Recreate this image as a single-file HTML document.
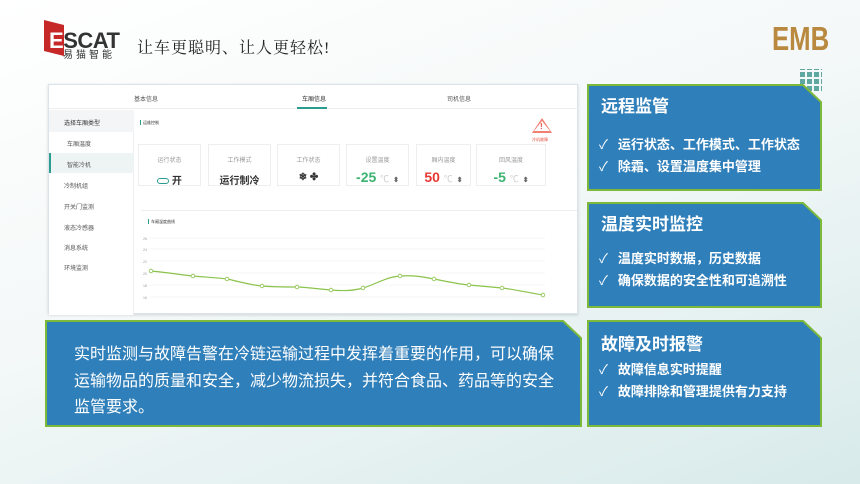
<!DOCTYPE html>
<html><head><meta charset="utf-8"><style>
*{margin:0;padding:0;box-sizing:border-box}
body{width:860px;height:484px;overflow:hidden;position:relative;background:linear-gradient(160deg,#ffffff 0%,#f4f8f8 45%,#d8eaea 100%);font-family:"Liberation Sans","Noto Sans CJK SC",sans-serif}
.abs{position:absolute}
.box{position:absolute}
.box svg{position:absolute;left:0;top:0}
.txt{position:absolute;color:#fff}
.t1{font-size:17px;font-weight:bold;left:14px;top:8px}
.li{font-size:13px;font-weight:bold;left:12px;position:absolute;white-space:nowrap}
.li span{font-weight:normal;margin-right:10px}
.shot{left:48px;top:84px;width:530px;height:230px;background:#fff;border:1px solid #dde3ea;box-shadow:0 1px 3px rgba(0,0,0,.15)}
.small{font-size:6px;color:#555}
.card{position:absolute;top:59px;height:42px;width:63px;border:1px solid #eee;text-align:center;font-size:6px;color:#999;padding-top:10px}
.card b{display:block;font-size:10px;margin-top:8px}
.card b.n{font-size:14px;margin-top:5px}
</style></head><body>
<div class="abs" style="left:44px;top:20px;width:20px;height:36px;background:#c62828;clip-path:polygon(0 0,100% 14%,100% 100%,0 86%)"></div>
<div class="abs" style="left:49px;top:28px;font-size:22px;font-weight:bold;color:#333;letter-spacing:-.5px;font-family:'Liberation Sans',sans-serif"><span style="color:#fff">E</span>SCAT</div>
<div class="abs" style="left:63px;top:46px;font-size:10px;color:#333;letter-spacing:3px">易猫智能</div>
<div class="abs" style="left:137px;top:35px;font-size:16px;color:#222;font-family:'Liberation Serif','Noto Serif CJK SC',serif;letter-spacing:1px">让车更聪明、让人更轻松!</div>
<div class="abs" style="left:772px;top:20px;font-size:33px;font-weight:bold;color:#b8893e;font-family:'Liberation Sans Narrow','Liberation Sans',sans-serif;transform:scaleX(.78);transform-origin:left">EMB</div>
<div class="abs" style="left:800px;top:69px;width:22px;height:22px;background:repeating-linear-gradient(90deg,#5fa8a0 0 5px,transparent 5px 7px);-webkit-mask:repeating-linear-gradient(0deg,#000 0 5px,transparent 5px 7px);mask:repeating-linear-gradient(0deg,#000 0 5px,transparent 5px 7px)"></div>

<div class="abs shot">
 <div class="abs" style="left:0;top:0;width:530px;height:24px;border-bottom:1px solid #eee"></div>
 <div class="abs small" style="left:85px;top:9px">基本信息</div>
 <div class="abs small" style="left:253px;top:9px;color:#333">车厢信息</div>
 <div class="abs" style="left:248px;top:22px;width:30px;height:2px;background:#2a9d8f"></div>
 <div class="abs small" style="left:398px;top:9px">司机信息</div>
 <div class="abs" style="left:0;top:25px;width:85px;height:205px;background:#fff;border-right:1px solid #eee"></div>
 <div class="abs" style="left:0;top:25px;width:85px;height:22px;background:#f3f5f7"></div>
 <div class="abs small" style="left:15px;top:33px;color:#333">选择车厢类型</div>
 <div class="abs small" style="left:18px;top:54px">车厢温度</div>
 <div class="abs" style="left:0;top:68px;width:85px;height:20px;background:#eef4f4;border-left:2px solid #2a9d8f"></div>
 <div class="abs small" style="left:18px;top:75px">智能冷机</div>
 <div class="abs small" style="left:15px;top:96px">冷制机组</div>
 <div class="abs small" style="left:15px;top:117px">开关门监测</div>
 <div class="abs small" style="left:15px;top:138px">液态冷感器</div>
 <div class="abs small" style="left:15px;top:158px">消息系统</div>
 <div class="abs small" style="left:15px;top:178px">环境监测</div>
 <div class="abs" style="left:91px;top:35px;width:1px;height:5px;background:#2a9d8f"></div>
 <div class="abs" style="left:94px;top:35px;font-size:4px;color:#333">运维控制</div>
 <div class="abs" style="left:483px;top:33px;width:0;height:0;border-left:10px solid transparent;border-right:10px solid transparent;border-bottom:15px solid #f08070"></div>
 <div class="abs" style="left:485px;top:36px;width:16px;height:10px;background:#fff;clip-path:polygon(50% 0,100% 100%,0 100%)"></div>
 <div class="abs" style="left:491px;top:37px;font-size:8px;color:#e74c3c;font-weight:bold">!</div>
 <div class="abs" style="left:483px;top:52px;font-size:4px;color:#e74c3c">冷机故障</div>
 <div class="card" style="left:89px">运行状态<b style="color:#333"><span style="display:inline-block;width:12px;height:6px;border:1px solid #2a9d8f;border-radius:3px;vertical-align:middle"></span> 开</b></div>
 <div class="card" style="left:159px">工作模式<b style="color:#333">运行制冷</b></div>
 <div class="card" style="left:228px">工作状态<b style="color:#333">❄ ✤</b></div>
 <div class="card" style="left:297px">设置温度<b class="n" style="color:#3cb371">-25 <span style="color:#ccc;font-weight:normal;font-size:9px">℃</span> <span style="color:#666;font-size:7px">⬍</span></b></div>
 <div class="card" style="left:367px;width:55px">厢内温度<b class="n" style="color:#e53935">50 <span style="color:#ccc;font-weight:normal;font-size:9px">℃</span> <span style="color:#666;font-size:7px">⬍</span></b></div>
 <div class="card" style="left:427px;width:70px">回风温度<b class="n" style="color:#3cb371">-5 <span style="color:#ccc;font-weight:normal;font-size:9px">℃</span> <span style="color:#666;font-size:7px">⬍</span></b></div>
 <div class="abs" style="left:92px;top:125px;width:436px;height:105px;border-top:1px solid #eee"></div>
 <div class="abs" style="left:99px;top:134px;width:1px;height:5px;background:#2a9d8f"></div>
 <div class="abs" style="left:102px;top:134px;font-size:4px;color:#333">车厢温度曲线</div>
 <svg class="abs" style="left:92px;top:140px" width="436" height="90">
  <g stroke="#eee" stroke-width="0.5"><line x1="8" y1="13" x2="404" y2="13"/><line x1="8" y1="24" x2="404" y2="24"/><line x1="8" y1="36" x2="404" y2="36"/><line x1="8" y1="48" x2="404" y2="48"/><line x1="8" y1="60" x2="404" y2="60"/><line x1="8" y1="72" x2="404" y2="72"/></g>
  <path d="M10 46 C31 48,41 50,52 51 S80 53,86 54 S109 60,121 61 S148 62,156 62 S177 64,190 65 S211 66,222 63 S245 52,259 51 S283 52,293 54 S317 59,328 60 S351 62,361 63 S390 68,402 70" fill="none" stroke="#8bc34a" stroke-width="1.2"/>
  <g fill="#fff" stroke="#8bc34a" stroke-width=".8"><circle cx="10" cy="46" r="1.8"/><circle cx="52" cy="51" r="1.8"/><circle cx="86" cy="54" r="1.8"/><circle cx="121" cy="61" r="1.8"/><circle cx="156" cy="62" r="1.8"/><circle cx="190" cy="65" r="1.8"/><circle cx="222" cy="63" r="1.8"/><circle cx="259" cy="51" r="1.8"/><circle cx="293" cy="54" r="1.8"/><circle cx="328" cy="60" r="1.8"/><circle cx="361" cy="63" r="1.8"/><circle cx="402" cy="70" r="1.8"/></g>
  <g font-size="3.5" fill="#999"><text x="2" y="15">26</text><text x="2" y="26">24</text><text x="2" y="38">22</text><text x="2" y="50">20</text><text x="2" y="62">18</text><text x="2" y="74">16</text></g>
 </svg>
</div>

<div class="box" style="left:45px;top:320px;width:537px;height:107px">
 <svg width="537" height="107"><polygon points="1,1 518,1 536,18 536,106 1,106" fill="#2f7fba" stroke="#7cb83a" stroke-width="2"/></svg>
 <div class="txt" style="left:29px;top:22px;white-space:nowrap;font-size:16px;line-height:26.5px">实时监测与故障告警在冷链运输过程中发挥着重要的作用，可以确保<br>运输物品的质量和安全，减少物流损失，并符合食品、药品等的安全<br>监管要求。</div>
</div>

<div class="box" style="left:587px;top:84px;width:235px;height:107px">
 <svg width="235" height="107"><polygon points="1,1 216,1 234,18 234,106 1,106" fill="#2f7fba" stroke="#7cb83a" stroke-width="2"/></svg>
 <div class="txt t1">远程监管</div>
 <div class="txt li" style="top:50px"><span>✓</span>运行状态、工作模式、工作状态</div>
 <div class="txt li" style="top:72px"><span>✓</span>除霜、设置温度集中管理</div>
</div>
<div class="box" style="left:587px;top:202px;width:235px;height:106px">
 <svg width="235" height="106"><polygon points="1,1 216,1 234,18 234,105 1,105" fill="#2f7fba" stroke="#7cb83a" stroke-width="2"/></svg>
 <div class="txt t1">温度实时监控</div>
 <div class="txt li" style="top:46px"><span>✓</span>温度实时数据，历史数据</div>
 <div class="txt li" style="top:68px"><span>✓</span>确保数据的安全性和可追溯性</div>
</div>
<div class="box" style="left:587px;top:320px;width:235px;height:107px">
 <svg width="235" height="107"><polygon points="1,1 216,1 234,18 234,106 1,106" fill="#2f7fba" stroke="#7cb83a" stroke-width="2"/></svg>
 <div class="txt t1" style="top:10px">故障及时报警</div>
 <div class="txt li" style="top:39px"><span>✓</span>故障信息实时提醒</div>
 <div class="txt li" style="top:61px"><span>✓</span>故障排除和管理提供有力支持</div>
</div>
</body></html>
